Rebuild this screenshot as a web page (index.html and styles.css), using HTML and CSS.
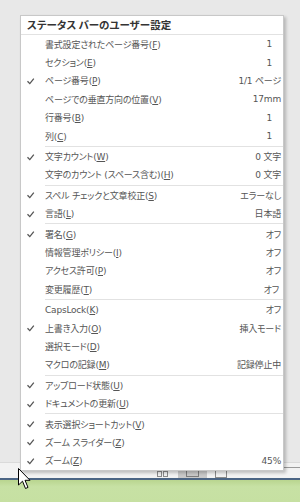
FILE: index.html
```html
<!DOCTYPE html>
<html>
<head lang="ja">
    <meta charset="UTF-8">
    <title>ステータス バーのユーザー設定</title>
    <link rel="stylesheet" href="styles.css">
</head>
<body>
<div class="app">
    <!--文書エリア-->
    <div class="workspace"></div>
    <!--ステータスバー-->
    <div class="statusbar">
        <span class="sb-read"><span></span><span></span></span>
        <span class="sb-print"><span></span></span>
        <span class="sb-web"><span></span></span>
        <span class="sb-minus"></span>
        <span class="sb-slider"></span>
    </div>
    <div class="desk"></div>
</div>

<!--メニュー-->
<div class="menu">
    <div class="menu_h">ステータス バーのユーザー設定</div>
    <div class="row"><span class="check"></span><span class="label">書式設定されたページ番号(<u>F</u>)</span><span class="value num">1</span></div>
    <div class="row"><span class="check"></span><span class="label">セクション(<u>E</u>)</span><span class="value num">1</span></div>
    <div class="row on"><span class="check"></span><span class="label">ページ番号(<u>P</u>)</span><span class="value">1/1 ページ</span></div>
    <div class="row"><span class="check"></span><span class="label">ページでの垂直方向の位置(<u>V</u>)</span><span class="value">17mm</span></div>
    <div class="row"><span class="check"></span><span class="label">行番号(<u>B</u>)</span><span class="value num">1</span></div>
    <div class="row"><span class="check"></span><span class="label">列(<u>C</u>)</span><span class="value num">1</span></div>
    <div class="sep"></div>
    <div class="row on"><span class="check"></span><span class="label">文字カウント(<u>W</u>)</span><span class="value">0 文字</span></div>
    <div class="row"><span class="check"></span><span class="label">文字のカウント (スペース含む)(<u>H</u>)</span><span class="value">0 文字</span></div>
    <div class="sep"></div>
    <div class="row on"><span class="check"></span><span class="label">スペル チェックと文章校正(<u>S</u>)</span><span class="value">エラーなし</span></div>
    <div class="row on"><span class="check"></span><span class="label">言語(<u>L</u>)</span><span class="value">日本語</span></div>
    <div class="sep"></div>
    <div class="row on"><span class="check"></span><span class="label">署名(<u>G</u>)</span><span class="value">オフ</span></div>
    <div class="row"><span class="check"></span><span class="label">情報管理ポリシー(<u>I</u>)</span><span class="value">オフ</span></div>
    <div class="row"><span class="check"></span><span class="label">アクセス許可(<u>P</u>)</span><span class="value">オフ</span></div>
    <div class="row"><span class="check"></span><span class="label">変更履歴(<u>T</u>)</span><span class="value shift">オフ</span></div>
    <div class="sep"></div>
    <div class="row"><span class="check"></span><span class="label">CapsLock(<u>K</u>)</span><span class="value">オフ</span></div>
    <div class="row on"><span class="check"></span><span class="label">上書き入力(<u>O</u>)</span><span class="value">挿入モード</span></div>
    <div class="row"><span class="check"></span><span class="label">選択モード(<u>D</u>)</span><span class="value"></span></div>
    <div class="row"><span class="check"></span><span class="label">マクロの記録(<u>M</u>)</span><span class="value">記録停止中</span></div>
    <div class="sep"></div>
    <div class="row on"><span class="check"></span><span class="label">アップロード状態(<u>U</u>)</span><span class="value"></span></div>
    <div class="row on"><span class="check"></span><span class="label">ドキュメントの更新(<u>U</u>)</span><span class="value"></span></div>
    <div class="sep"></div>
    <div class="row on"><span class="check"></span><span class="label">表示選択ショートカット(<u>V</u>)</span><span class="value"></span></div>
    <div class="row on"><span class="check"></span><span class="label">ズーム スライダー(<u>Z</u>)</span><span class="value"></span></div>
    <div class="row on"><span class="check"></span><span class="label">ズーム(<u>Z</u>)</span><span class="value">45%</span></div>
</div>

<!--マウスカーソル-->
<svg class="cursor" width="14" height="24" viewBox="0 0 14 24">
    <path d="M1.5 1.5 L1.5 18 L5.5 14.2 L8.5 21.5 L11 20.4 L8 13.3 L13 13.3 Z" fill="#fff" stroke="#000" stroke-width="1"/>
</svg>
</body>
</html>
```

FILE: styles.css
```css
body {
    margin: 0;
    padding: 0;
    font-family: "DejaVu Sans", "Noto Sans CJK JP", sans-serif;
    font-size: 9px;
    background-color: #e8e8e8;
}
.app {
    width: 300px;
    height: 502px;
    display: flex;
    flex-direction: column;
}
.workspace {
    flex: 1;
    background-color: #e8e8e8;
    border-bottom: 1px solid #dadada;
}
.statusbar {
    height: 15px;
    flex-shrink: 0;
    background-color: #f2f2f2;
    border-bottom: 2px solid #4b6584;
    display: flex;
    align-items: center;
    padding-left: 157px;
}
.sb-read {
    width: 11px;
    height: 6px;
    display: flex;
    gap: 1px;
    margin-top: 6px;
}
.sb-read span {
    flex: 1;
    border: 1px solid #8a8a8a;
}
.sb-print {
    width: 29px;
    height: 15px;
    margin-left: 10px;
    background-color: #c9c9c9;
    display: flex;
    align-items: center;
    justify-content: center;
}
.sb-print span {
    width: 11px;
    height: 5px;
    border: 1px solid #7c7c7c;
    margin-top: 6px;
}
.sb-web {
    width: 10px;
    height: 6px;
    margin-left: 8px;
    margin-top: 6px;
    border: 1px solid #8a8a8a;
}
.sb-minus {
    width: 5px;
    height: 1px;
    margin-left: 16px;
    margin-top: -7px;
    background-color: #555;
}
.sb-slider {
    flex: 1;
    height: 1px;
    margin-left: 3px;
    margin-top: -7px;
    background-color: #9a9a9a;
}
.desk {
    height: 22px;
    flex-shrink: 0;
    background: linear-gradient(#b9d58f, #c7e1a4 30%, #c6e0a2);
}

/*メニュー*/
.menu {
    position: absolute;
    left: 20px;
    top: 15px;
    width: 262px;
    background-color: #fff;
    border: 1px solid #c8c8c8;
    box-shadow: 2px 2px 3px rgba(0, 0, 0, 0.22);
    color: #555;
    font-feature-settings: "palt";
    letter-spacing: -0.2px;
}
.menu_h {
    height: 18px;
    line-height: 18px;
    padding-left: 6px;
    font-family: "Noto Sans CJK JP", sans-serif;
    font-size: 10.5px;
    font-weight: bold;
    letter-spacing: 0;
    color: #333;
    border-bottom: 1px solid #e2e2e2;
}
.row {
    height: 18.4px;
    display: flex;
    align-items: center;
    white-space: nowrap;
}
.check {
    width: 24px;
    height: 18px;
    flex-shrink: 0;
}
.row.on .check {
    background: url("data:image/svg+xml,%3Csvg xmlns='http://www.w3.org/2000/svg' width='24' height='18'%3E%3Cpath d='M6.5 9.2 L8.8 11.6 L12.8 6.6' fill='none' stroke='%23555' stroke-width='1.3'/%3E%3C/svg%3E") no-repeat;
}
.label {
    flex: 1;
}
.label u {
    text-underline-offset: 1px;
}
.value {
    padding-right: 2px;
}
.value.num {
    padding-right: 11px;
}
.value.shift {
    padding-right: 4px;
}
.sep {
    height: 1px;
    margin: 0.5px 0 0.5px 24px;
    background-color: #e2e2e2;
}
.cursor {
    position: absolute;
    left: 17px;
    top: 467px;
}
```
